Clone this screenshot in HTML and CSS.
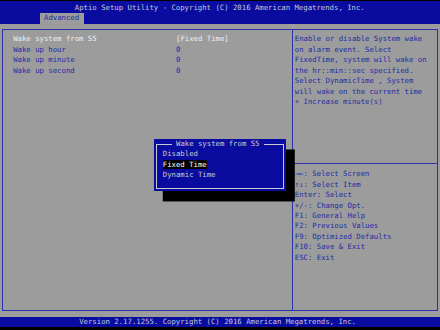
FILE: index.html
```html
<!DOCTYPE html>
<html>
<head>
    <title>Aptio Setup Utility</title>
    <link rel="stylesheet" href="styles.css">
</head>
<body>
    <div class="header">
        <div class="title">Aptio Setup Utility - Copyright (C) 2016 American Megatrends, Inc.</div>
        <div class="tabs">
            <div class="tab">Advanced</div>
        </div>
    </div>

    <div class="main">
        <div class="frame">
            <div class="settings">
                <div class="row selected">
                    <div class="label">Wake system from S5</div>
                    <div class="value">[Fixed Time]</div>
                </div>
                <div class="row">
                    <div class="label">Wake up hour</div>
                    <div class="value">0</div>
                </div>
                <div class="row">
                    <div class="label">Wake up minute</div>
                    <div class="value">0</div>
                </div>
                <div class="row">
                    <div class="label">Wake up second</div>
                    <div class="value">0</div>
                </div>
            </div>
            <div class="side">
                <div class="help">
                    <div>Enable or disable System wake</div>
                    <div>on alarm event. Select</div>
                    <div>FixedTime, system will wake on</div>
                    <div>the hr::min::sec specified.</div>
                    <div>Select DynamicTime , System</div>
                    <div>will wake on the current time</div>
                    <div>+ Increase minute(s)</div>
                </div>
                <div class="keys">
                    <div>&rarr;&larr;: Select Screen</div>
                    <div>&uarr;&darr;: Select Item</div>
                    <div>Enter: Select</div>
                    <div>+/-: Change Opt.</div>
                    <div>F1: General Help</div>
                    <div>F2: Previous Values</div>
                    <div>F9: Optimized Defaults</div>
                    <div>F10: Save &amp; Exit</div>
                    <div>ESC: Exit</div>
                </div>
            </div>
        </div>

        <!-- option popup for the selected item -->
        <div class="popup">
            <div class="popup-frame">
                <div class="popup-title"> Wake system from S5 </div>
                <div class="option">Disabled</div>
                <div class="option"><span class="picked">Fixed Time</span></div>
                <div class="option">Dynamic Time</div>
            </div>
        </div>
    </div>

    <div class="footer">Version 2.17.1255. Copyright (C) 2016 American Megatrends, Inc.</div>
</body>
</html>
```

FILE: styles.css
```css
body {
    margin: 0;
    background-color: #000;
    font-family: "DejaVu Sans Mono", monospace;
    font-size: 7.31px;
    line-height: 10.45px;
    white-space: nowrap;
}
.header {
    margin-top: 1px;
    padding-top: 2px;
    background-color: #0a0ca0;
    color: #c4c8d8;
}
.title {
    padding-left: 74.8px;
}
.tabs {
    display: flex;
    padding-left: 39.6px;
}
.tab {
    width: 44px;
    padding-left: 4.4px;
    box-sizing: border-box;
    line-height: 10.55px;
    background-color: #9c9c9c;
    color: #1a2a9c;
}
.main {
    position: relative;
    height: 292.5px;
    padding-top: 5px;
    box-sizing: border-box;
    background-color: #9c9c9c;
    color: #1c2ca6;
}
.frame {
    display: flex;
    margin-left: 2px;
    width: 436px;
    height: 282px;
    box-sizing: border-box;
    border: 1px solid #2a32aa;
}
.settings {
    width: 289px;
    padding: 4.35px 0 0 10.2px;
    box-sizing: border-box;
}
.row {
    display: flex;
}
.label {
    width: 162.8px;
}
.selected {
    color: #f0f0f0;
}
.side {
    flex: 1;
    border-left: 1px solid #2a32aa;
}
.help {
    height: 134px;
    padding: 4.35px 0 0 1.8px;
    box-sizing: border-box;
    border-bottom: 1px solid #2a32aa;
}
.keys {
    padding: 5.2px 0 0 1.8px;
}
.popup {
    position: absolute;
    left: 154px;
    top: 114.95px;
    width: 132px;
    height: 52.25px;
    padding: 5.2px 2px 0 2px;
    box-sizing: border-box;
    background-color: #0a0ca0;
    color: #cccccc;
    box-shadow: 8.8px 10.45px 0 #000;
}
.popup-frame {
    height: 44.6px;
    border: 1px solid #c8c8d0;
    box-sizing: border-box;
    padding-left: 5.8px;
}
.popup-title {
    width: fit-content;
    margin: -6.2px 0 0 8.8px;
    background-color: #0a0ca0;
    white-space: pre;
}
.picked {
    background-color: #000;
    color: #fff;
}
.footer {
    height: 10.45px;
    padding-left: 79.2px;
    background-color: #0a0ca0;
    color: #c4c8d8;
}
```
